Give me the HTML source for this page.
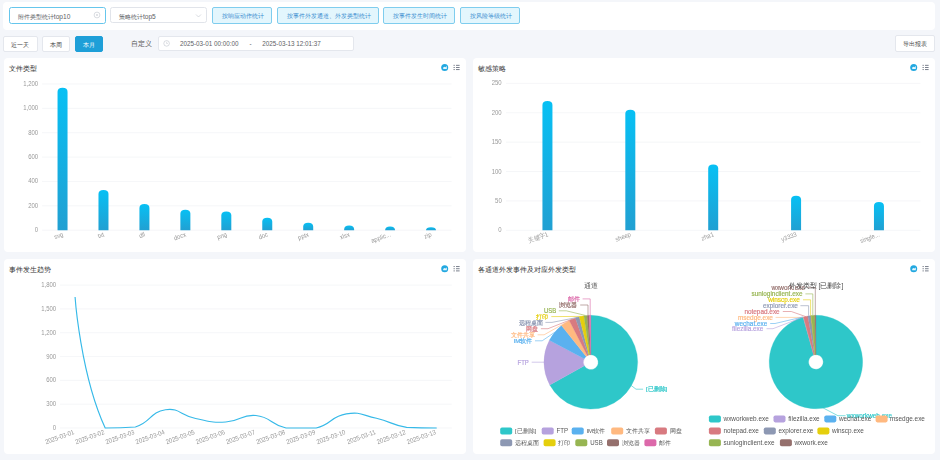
<!DOCTYPE html><html><head><meta charset="utf-8"><style>
*{box-sizing:border-box;margin:0;padding:0}
html,body{width:940px;height:460px;overflow:hidden;background:#f4f6fa;font-family:"Liberation Sans", sans-serif;}
.a{position:absolute}
.card{position:absolute;background:#fff;border-radius:4px}
.inp{position:absolute;background:#fff;border:1px solid #e1e4ea;border-radius:2.5px;font-size:6.5px;color:#606266;line-height:14.5px;white-space:nowrap}
.btn{position:absolute;border:1px solid #7fcdee;background:#e3f6fd;border-radius:2px;font-size:6px;color:#3d8fd2;text-align:center;white-space:nowrap}
.wb{position:absolute;border:1px solid #e4e7ed;background:#fff;border-radius:2px;font-size:6px;color:#606266;text-align:center;white-space:nowrap}
svg text{font-family:"Liberation Sans", sans-serif}
</style></head><body>

<div class="card" style="left:2.9px;top:1.5px;width:932.4px;height:28.3px"></div>
<div class="inp" style="left:9px;top:7px;width:97px;height:16.8px;border-color:#66c6ec"></div>
<div class="a" style="left:17.8px;top:13.80px;font-size:6px;line-height:6px;color:#606266;white-space:nowrap;">附件类型统计<span style="font-size:6.6px">top10</span></div>
<svg class="a" style="left:93px;top:11.3px" width="8" height="8" viewBox="0 0 8 8"><circle cx="4" cy="4" r="2.9" fill="none" stroke="#c0c4cc" stroke-width="0.6"/><path d="M3 3L5 5M5 3L3 5" stroke="#c0c4cc" stroke-width="0.5"/></svg>
<div class="inp" style="left:110.2px;top:7.2px;width:97px;height:16.3px"></div>
<div class="a" style="left:118.9px;top:13.80px;font-size:6px;line-height:6px;color:#606266;white-space:nowrap;">策略统计<span style="font-size:6.6px">top5</span></div>
<svg class="a" style="left:195px;top:12.8px" width="7" height="6" viewBox="0 0 7 6"><path d="M1 1.5L3.5 4L6 1.5" fill="none" stroke="#c0c4cc" stroke-width="0.6"/></svg>
<div class="btn" style="left:212.1px;top:7.2px;width:59.9px;height:16.5px"></div>
<div class="a" style="left:213.1px;width:59.90px;text-align:center;top:12.90px;font-size:6px;line-height:6px;color:#3a8ccf;white-space:nowrap;">按响应动作统计</div>
<div class="btn" style="left:276.8px;top:7.2px;width:101.9px;height:16.5px"></div>
<div class="a" style="left:277.8px;width:101.90px;text-align:center;top:12.90px;font-size:6px;line-height:6px;color:#3a8ccf;white-space:nowrap;">按事件外发通道、外发类型统计</div>
<div class="btn" style="left:383.3px;top:7.2px;width:71.8px;height:16.5px"></div>
<div class="a" style="left:384.3px;width:71.80px;text-align:center;top:12.90px;font-size:6px;line-height:6px;color:#3a8ccf;white-space:nowrap;">按事件发生时间统计</div>
<div class="btn" style="left:460.1px;top:7.2px;width:59.7px;height:16.5px"></div>
<div class="a" style="left:461.1px;width:59.70px;text-align:center;top:12.90px;font-size:6px;line-height:6px;color:#3a8ccf;white-space:nowrap;">按风险等级统计</div>
<div class="wb" style="left:3.2px;top:36.4px;width:34.4px;height:15.5px"></div>
<div class="a" style="left:3.2px;width:34.40px;text-align:center;top:41.70px;font-size:6px;line-height:6px;color:#444;white-space:nowrap;">近一天</div>
<div class="wb" style="left:42.1px;top:36.4px;width:27.7px;height:15.5px"></div>
<div class="a" style="left:42.1px;width:27.70px;text-align:center;top:41.70px;font-size:6px;line-height:6px;color:#444;white-space:nowrap;">本周</div>
<div class="wb" style="left:75.3px;top:36.4px;width:27.7px;height:15.5px;background:#1e9fd8;border-color:#1e9fd8"></div>
<div class="a" style="left:75.3px;width:27.70px;text-align:center;top:41.70px;font-size:6px;line-height:6px;color:#fff;white-space:nowrap;">本月</div>
<div class="a" style="left:131px;top:39.50px;font-size:7px;line-height:7px;color:#555;white-space:nowrap;">自定义</div>
<div class="wb" style="left:157.7px;top:36.4px;width:196.3px;height:14.7px"></div>
<svg class="a" style="left:163px;top:40px" width="8" height="8" viewBox="0 0 8 8"><circle cx="3.6" cy="3.4" r="2.8" fill="none" stroke="#c0c4cc" stroke-width="0.6"/><path d="M3.6 1.8V3.5H4.9" fill="none" stroke="#c0c4cc" stroke-width="0.5"/></svg>
<div class="a" style="left:180px;top:41.08px;font-size:6.3px;line-height:6.3px;color:#606266;white-space:nowrap;">2025-03-01 00:00:00</div>
<div class="a" style="left:249.5px;top:41.08px;font-size:6.3px;line-height:6.3px;color:#606266;white-space:nowrap;">-</div>
<div class="a" style="left:262.3px;top:41.08px;font-size:6.3px;line-height:6.3px;color:#606266;white-space:nowrap;">2025-03-13 12:01:37</div>
<div class="wb" style="left:895.1px;top:35.3px;width:40px;height:16.6px"></div>
<div class="a" style="left:895.1px;width:39.30px;text-align:center;top:41.10px;font-size:6px;line-height:6px;color:#444;white-space:nowrap;">导出报表</div>
<div class="card" style="left:3.5px;top:57.7px;width:462.5px;height:194.7px"></div>
<div class="card" style="left:472.5px;top:57.7px;width:462.5px;height:194.7px"></div>
<div class="card" style="left:3.5px;top:259px;width:462.5px;height:195.0px"></div>
<div class="card" style="left:472.5px;top:259px;width:462.5px;height:195.0px"></div>
<div class="a" style="left:9.1px;top:64.80px;font-size:7px;line-height:7px;color:#333;white-space:nowrap;">文件类型</div>
<div class="a" style="left:478.1px;top:64.80px;font-size:7px;line-height:7px;color:#333;white-space:nowrap;">敏感策略</div>
<div class="a" style="left:9.1px;top:266.10px;font-size:7px;line-height:7px;color:#333;white-space:nowrap;">事件发生趋势</div>
<div class="a" style="left:478.1px;top:266.10px;font-size:7px;line-height:7px;color:#333;white-space:nowrap;">各通道外发事件及对应外发类型</div>
<svg class="a" style="left:0;top:0;will-change:transform" width="940" height="460" viewBox="0 0 940 460">
<defs><linearGradient id="bg" x1="0" y1="0" x2="0" y2="1"><stop offset="0" stop-color="#07c0f4"/><stop offset="1" stop-color="#21a0d2"/></linearGradient></defs>
<circle cx="444.7" cy="67.5" r="3.5" fill="#23a8e0"/>
<path d="M443.20 68.90V67.60L444.30 66.80L445.40 67.20L446.80 66.10V68.90Z" fill="#e6f6fd"/>
<rect x="453.4" y="64.85" width="1.6" height="0.9" fill="#8a8f99"/>
<rect x="456.0" y="64.85" width="3.6" height="0.9" fill="#6b7280"/>
<rect x="453.4" y="67.0" width="1.6" height="0.9" fill="#8a8f99"/>
<rect x="456.0" y="67.0" width="3.6" height="0.9" fill="#6b7280"/>
<rect x="453.4" y="69.14999999999999" width="1.6" height="0.9" fill="#8a8f99"/>
<rect x="456.0" y="69.14999999999999" width="3.6" height="0.9" fill="#6b7280"/>
<circle cx="913.7" cy="67.5" r="3.5" fill="#23a8e0"/>
<path d="M912.20 68.90V67.60L913.30 66.80L914.40 67.20L915.80 66.10V68.90Z" fill="#e6f6fd"/>
<rect x="922.4" y="64.85" width="1.6" height="0.9" fill="#8a8f99"/>
<rect x="925.0" y="64.85" width="3.6" height="0.9" fill="#6b7280"/>
<rect x="922.4" y="67.0" width="1.6" height="0.9" fill="#8a8f99"/>
<rect x="925.0" y="67.0" width="3.6" height="0.9" fill="#6b7280"/>
<rect x="922.4" y="69.14999999999999" width="1.6" height="0.9" fill="#8a8f99"/>
<rect x="925.0" y="69.14999999999999" width="3.6" height="0.9" fill="#6b7280"/>
<circle cx="444.7" cy="268.8" r="3.5" fill="#23a8e0"/>
<path d="M443.20 270.20V268.90L444.30 268.10L445.40 268.50L446.80 267.40V270.20Z" fill="#e6f6fd"/>
<rect x="453.4" y="266.15000000000003" width="1.6" height="0.9" fill="#8a8f99"/>
<rect x="456.0" y="266.15000000000003" width="3.6" height="0.9" fill="#6b7280"/>
<rect x="453.4" y="268.3" width="1.6" height="0.9" fill="#8a8f99"/>
<rect x="456.0" y="268.3" width="3.6" height="0.9" fill="#6b7280"/>
<rect x="453.4" y="270.45000000000005" width="1.6" height="0.9" fill="#8a8f99"/>
<rect x="456.0" y="270.45000000000005" width="3.6" height="0.9" fill="#6b7280"/>
<circle cx="913.7" cy="268.8" r="3.5" fill="#23a8e0"/>
<path d="M912.20 270.20V268.90L913.30 268.10L914.40 268.50L915.80 267.40V270.20Z" fill="#e6f6fd"/>
<rect x="922.4" y="266.15000000000003" width="1.6" height="0.9" fill="#8a8f99"/>
<rect x="925.0" y="266.15000000000003" width="3.6" height="0.9" fill="#6b7280"/>
<rect x="922.4" y="268.3" width="1.6" height="0.9" fill="#8a8f99"/>
<rect x="925.0" y="268.3" width="3.6" height="0.9" fill="#6b7280"/>
<rect x="922.4" y="270.45000000000005" width="1.6" height="0.9" fill="#8a8f99"/>
<rect x="925.0" y="270.45000000000005" width="3.6" height="0.9" fill="#6b7280"/>
<line x1="42.07" y1="230.20" x2="451.5" y2="230.20" stroke="#eef0f3" stroke-width="0.6"/>
<text transform="translate(38.1,232.20) scale(0.88,1)" font-size="6.8" fill="#999" text-anchor="end">0</text>
<line x1="42.07" y1="205.83" x2="451.5" y2="205.83" stroke="#eef0f3" stroke-width="0.6"/>
<text transform="translate(38.1,207.83) scale(0.88,1)" font-size="6.8" fill="#999" text-anchor="end">200</text>
<line x1="42.07" y1="181.47" x2="451.5" y2="181.47" stroke="#eef0f3" stroke-width="0.6"/>
<text transform="translate(38.1,183.47) scale(0.88,1)" font-size="6.8" fill="#999" text-anchor="end">400</text>
<line x1="42.07" y1="157.10" x2="451.5" y2="157.10" stroke="#eef0f3" stroke-width="0.6"/>
<text transform="translate(38.1,159.10) scale(0.88,1)" font-size="6.8" fill="#999" text-anchor="end">600</text>
<line x1="42.07" y1="132.73" x2="451.5" y2="132.73" stroke="#eef0f3" stroke-width="0.6"/>
<text transform="translate(38.1,134.73) scale(0.88,1)" font-size="6.8" fill="#999" text-anchor="end">800</text>
<line x1="42.07" y1="108.37" x2="451.5" y2="108.37" stroke="#eef0f3" stroke-width="0.6"/>
<text transform="translate(38.1,110.37) scale(0.88,1)" font-size="6.8" fill="#999" text-anchor="end">1,000</text>
<line x1="42.07" y1="84.00" x2="451.5" y2="84.00" stroke="#eef0f3" stroke-width="0.6"/>
<text transform="translate(38.1,86.00) scale(0.88,1)" font-size="6.8" fill="#999" text-anchor="end">1,200</text>
<path d="M57.54 230.2V91.66Q57.54 87.66 62.54 87.66Q67.54 87.66 67.54 91.66V230.2Z" fill="url(#bg)"/>
<text transform="translate(62.04,231.70) rotate(-20) scale(0.9,1)" x="0" y="4.7" font-size="6.6" fill="#999" text-anchor="end">svg</text>
<path d="M98.48 230.2V194.00Q98.48 190.00 103.48 190.00Q108.48 190.00 108.48 194.00V230.2Z" fill="url(#bg)"/>
<text transform="translate(102.98,231.70) rotate(-20) scale(0.9,1)" x="0" y="4.7" font-size="6.6" fill="#999" text-anchor="end">txt</text>
<path d="M139.43 230.2V207.88Q139.43 203.88 144.43 203.88Q149.43 203.88 149.43 207.88V230.2Z" fill="url(#bg)"/>
<text transform="translate(143.93,231.70) rotate(-20) scale(0.9,1)" x="0" y="4.7" font-size="6.6" fill="#999" text-anchor="end">dll</text>
<path d="M180.37 230.2V213.73Q180.37 209.73 185.37 209.73Q190.37 209.73 190.37 213.73V230.2Z" fill="url(#bg)"/>
<text transform="translate(184.87,231.70) rotate(-20) scale(0.9,1)" x="0" y="4.7" font-size="6.6" fill="#999" text-anchor="end">docx</text>
<path d="M221.31 230.2V215.56Q221.31 211.56 226.31 211.56Q231.31 211.56 231.31 215.56V230.2Z" fill="url(#bg)"/>
<text transform="translate(225.81,231.70) rotate(-20) scale(0.9,1)" x="0" y="4.7" font-size="6.6" fill="#999" text-anchor="end">png</text>
<path d="M262.26 230.2V221.65Q262.26 217.65 267.26 217.65Q272.26 217.65 272.26 221.65V230.2Z" fill="url(#bg)"/>
<text transform="translate(266.76,231.70) rotate(-20) scale(0.9,1)" x="0" y="4.7" font-size="6.6" fill="#999" text-anchor="end">doc</text>
<path d="M303.20 230.2V226.77Q303.20 222.77 308.20 222.77Q313.20 222.77 313.20 226.77V230.2Z" fill="url(#bg)"/>
<text transform="translate(307.70,231.70) rotate(-20) scale(0.9,1)" x="0" y="4.7" font-size="6.6" fill="#999" text-anchor="end">pptx</text>
<path d="M344.14 230.2V229.57Q344.14 225.57 349.14 225.57Q354.14 225.57 354.14 229.57V230.2Z" fill="url(#bg)"/>
<text transform="translate(348.64,231.70) rotate(-20) scale(0.9,1)" x="0" y="4.7" font-size="6.6" fill="#999" text-anchor="end">xlsx</text>
<path d="M385.09 230.2V230.20Q385.09 226.42 390.09 226.42Q395.09 226.42 395.09 230.20V230.2Z" fill="url(#bg)"/>
<text transform="translate(389.59,231.70) rotate(-20) scale(0.9,1)" x="0" y="4.7" font-size="6.6" fill="#999" text-anchor="end">applic...</text>
<path d="M426.03 230.2V230.20Q426.03 227.15 431.03 227.15Q436.03 227.15 436.03 230.20V230.2Z" fill="url(#bg)"/>
<text transform="translate(430.53,231.70) rotate(-20) scale(0.9,1)" x="0" y="4.7" font-size="6.6" fill="#999" text-anchor="end">zip</text>
<line x1="506" y1="230.30" x2="920.4" y2="230.30" stroke="#eef0f3" stroke-width="0.6"/>
<text transform="translate(501.7,232.30) scale(0.88,1)" font-size="6.8" fill="#999" text-anchor="end">0</text>
<line x1="506" y1="200.92" x2="920.4" y2="200.92" stroke="#eef0f3" stroke-width="0.6"/>
<text transform="translate(501.7,202.92) scale(0.88,1)" font-size="6.8" fill="#999" text-anchor="end">50</text>
<line x1="506" y1="171.54" x2="920.4" y2="171.54" stroke="#eef0f3" stroke-width="0.6"/>
<text transform="translate(501.7,173.54) scale(0.88,1)" font-size="6.8" fill="#999" text-anchor="end">100</text>
<line x1="506" y1="142.16" x2="920.4" y2="142.16" stroke="#eef0f3" stroke-width="0.6"/>
<text transform="translate(501.7,144.16) scale(0.88,1)" font-size="6.8" fill="#999" text-anchor="end">150</text>
<line x1="506" y1="112.78" x2="920.4" y2="112.78" stroke="#eef0f3" stroke-width="0.6"/>
<text transform="translate(501.7,114.78) scale(0.88,1)" font-size="6.8" fill="#999" text-anchor="end">200</text>
<line x1="506" y1="83.40" x2="920.4" y2="83.40" stroke="#eef0f3" stroke-width="0.6"/>
<text transform="translate(501.7,85.40) scale(0.88,1)" font-size="6.8" fill="#999" text-anchor="end">250</text>
<path d="M542.44 230.3V105.03Q542.44 101.03 547.44 101.03Q552.44 101.03 552.44 105.03V230.3Z" fill="url(#bg)"/>
<text transform="translate(546.94,231.80) rotate(-20) scale(0.9,1)" x="0" y="4.7" font-size="6.6" fill="#999" text-anchor="end">关键字1</text>
<path d="M625.32 230.3V113.84Q625.32 109.84 630.32 109.84Q635.32 109.84 635.32 113.84V230.3Z" fill="url(#bg)"/>
<text transform="translate(629.82,231.80) rotate(-20) scale(0.9,1)" x="0" y="4.7" font-size="6.6" fill="#999" text-anchor="end">sheep</text>
<path d="M708.20 230.3V168.49Q708.20 164.49 713.20 164.49Q718.20 164.49 718.20 168.49V230.3Z" fill="url(#bg)"/>
<text transform="translate(712.70,231.80) rotate(-20) scale(0.9,1)" x="0" y="4.7" font-size="6.6" fill="#999" text-anchor="end">zha1</text>
<path d="M791.08 230.3V199.81Q791.08 195.81 796.08 195.81Q801.08 195.81 801.08 199.81V230.3Z" fill="url(#bg)"/>
<text transform="translate(795.58,231.80) rotate(-20) scale(0.9,1)" x="0" y="4.7" font-size="6.6" fill="#999" text-anchor="end">y3333</text>
<path d="M873.96 230.3V206.10Q873.96 202.10 878.96 202.10Q883.96 202.10 883.96 206.10V230.3Z" fill="url(#bg)"/>
<text transform="translate(878.46,231.80) rotate(-20) scale(0.9,1)" x="0" y="4.7" font-size="6.6" fill="#999" text-anchor="end">single...</text>
<line x1="60" y1="428.00" x2="451.8" y2="428.00" stroke="#eef0f3" stroke-width="0.6"/>
<text transform="translate(56.2,430.00) scale(0.88,1)" font-size="6.8" fill="#999" text-anchor="end">0</text>
<line x1="60" y1="404.18" x2="451.8" y2="404.18" stroke="#eef0f3" stroke-width="0.6"/>
<text transform="translate(56.2,406.18) scale(0.88,1)" font-size="6.8" fill="#999" text-anchor="end">300</text>
<line x1="60" y1="380.37" x2="451.8" y2="380.37" stroke="#eef0f3" stroke-width="0.6"/>
<text transform="translate(56.2,382.37) scale(0.88,1)" font-size="6.8" fill="#999" text-anchor="end">600</text>
<line x1="60" y1="356.55" x2="451.8" y2="356.55" stroke="#eef0f3" stroke-width="0.6"/>
<text transform="translate(56.2,358.55) scale(0.88,1)" font-size="6.8" fill="#999" text-anchor="end">900</text>
<line x1="60" y1="332.73" x2="451.8" y2="332.73" stroke="#eef0f3" stroke-width="0.6"/>
<text transform="translate(56.2,334.73) scale(0.88,1)" font-size="6.8" fill="#999" text-anchor="end">1,200</text>
<line x1="60" y1="308.92" x2="451.8" y2="308.92" stroke="#eef0f3" stroke-width="0.6"/>
<text transform="translate(56.2,310.92) scale(0.88,1)" font-size="6.8" fill="#999" text-anchor="end">1,500</text>
<line x1="60" y1="285.10" x2="451.8" y2="285.10" stroke="#eef0f3" stroke-width="0.6"/>
<text transform="translate(56.2,287.10) scale(0.88,1)" font-size="6.8" fill="#999" text-anchor="end">1,800</text>
<text transform="translate(73.07,429.50) rotate(-20) scale(0.9,1)" x="0" y="4.7" font-size="6.6" fill="#999" text-anchor="end">2025-03-01</text>
<text transform="translate(103.21,429.50) rotate(-20) scale(0.9,1)" x="0" y="4.7" font-size="6.6" fill="#999" text-anchor="end">2025-03-02</text>
<text transform="translate(133.35,429.50) rotate(-20) scale(0.9,1)" x="0" y="4.7" font-size="6.6" fill="#999" text-anchor="end">2025-03-03</text>
<text transform="translate(163.48,429.50) rotate(-20) scale(0.9,1)" x="0" y="4.7" font-size="6.6" fill="#999" text-anchor="end">2025-03-04</text>
<text transform="translate(193.62,429.50) rotate(-20) scale(0.9,1)" x="0" y="4.7" font-size="6.6" fill="#999" text-anchor="end">2025-03-05</text>
<text transform="translate(223.76,429.50) rotate(-20) scale(0.9,1)" x="0" y="4.7" font-size="6.6" fill="#999" text-anchor="end">2025-03-06</text>
<text transform="translate(253.90,429.50) rotate(-20) scale(0.9,1)" x="0" y="4.7" font-size="6.6" fill="#999" text-anchor="end">2025-03-07</text>
<text transform="translate(284.04,429.50) rotate(-20) scale(0.9,1)" x="0" y="4.7" font-size="6.6" fill="#999" text-anchor="end">2025-03-08</text>
<text transform="translate(314.18,429.50) rotate(-20) scale(0.9,1)" x="0" y="4.7" font-size="6.6" fill="#999" text-anchor="end">2025-03-09</text>
<text transform="translate(344.32,429.50) rotate(-20) scale(0.9,1)" x="0" y="4.7" font-size="6.6" fill="#999" text-anchor="end">2025-03-10</text>
<text transform="translate(374.45,429.50) rotate(-20) scale(0.9,1)" x="0" y="4.7" font-size="6.6" fill="#999" text-anchor="end">2025-03-11</text>
<text transform="translate(404.59,429.50) rotate(-20) scale(0.9,1)" x="0" y="4.7" font-size="6.6" fill="#999" text-anchor="end">2025-03-12</text>
<text transform="translate(434.73,429.50) rotate(-20) scale(0.9,1)" x="0" y="4.7" font-size="6.6" fill="#999" text-anchor="end">2025-03-13</text>
<path d="M75.07 297.01 C75.07 297.01 80.59 374.89 105.21 428.00 C110.73 428.00 121.35 428.00 135.35 427.05 C151.48 422.16 149.65 411.99 165.48 409.74 C179.78 407.71 180.30 415.35 195.62 418.47 C210.44 421.50 210.82 422.79 225.76 422.05 C240.95 421.29 241.26 414.01 255.90 415.46 C271.40 416.99 270.37 424.74 286.04 428.00 C300.51 428.00 301.86 428.00 316.18 428.00 C331.99 424.29 330.58 416.40 346.32 413.87 C360.72 411.55 361.63 415.00 376.45 418.31 C391.77 421.74 391.20 424.89 406.59 427.36 C421.34 428.00 436.73 428.00 436.73 428.00" fill="none" stroke="#36b9e8" stroke-width="1.15"/>
<path d="M590.80 315.30A46.9 46.9 0 1 1 549.78 384.94L584.33 365.79A7.4 7.4 0 1 0 590.80 354.80Z" fill="#2ec7c9" stroke="#2ec7c9" stroke-width="0.3" stroke-linejoin="round"/>
<path d="M549.78 384.94A46.9 46.9 0 0 1 549.39 340.18L584.27 358.73A7.4 7.4 0 0 0 584.33 365.79Z" fill="#b6a2de" stroke="#b6a2de" stroke-width="0.3" stroke-linejoin="round"/>
<path d="M549.39 340.18A46.9 46.9 0 0 1 561.54 325.55L586.18 356.42A7.4 7.4 0 0 0 584.27 358.73Z" fill="#5ab1ef" stroke="#5ab1ef" stroke-width="0.3" stroke-linejoin="round"/>
<path d="M561.54 325.55A46.9 46.9 0 0 1 569.22 320.56L587.39 355.63A7.4 7.4 0 0 0 586.18 356.42Z" fill="#ffb980" stroke="#ffb980" stroke-width="0.3" stroke-linejoin="round"/>
<path d="M569.22 320.56A46.9 46.9 0 0 1 575.38 317.91L588.37 355.21A7.4 7.4 0 0 0 587.39 355.63Z" fill="#d87a80" stroke="#d87a80" stroke-width="0.3" stroke-linejoin="round"/>
<path d="M575.38 317.91A46.9 46.9 0 0 1 579.30 316.73L588.98 355.03A7.4 7.4 0 0 0 588.37 355.21Z" fill="#8d98b3" stroke="#8d98b3" stroke-width="0.3" stroke-linejoin="round"/>
<path d="M579.30 316.73A46.9 46.9 0 0 1 583.91 315.81L589.71 354.88A7.4 7.4 0 0 0 588.98 355.03Z" fill="#e5cf0d" stroke="#e5cf0d" stroke-width="0.3" stroke-linejoin="round"/>
<path d="M583.91 315.81A46.9 46.9 0 0 1 587.12 315.44L590.22 354.82A7.4 7.4 0 0 0 589.71 354.88Z" fill="#97b552" stroke="#97b552" stroke-width="0.3" stroke-linejoin="round"/>
<path d="M587.12 315.44A46.9 46.9 0 0 1 589.20 315.33L590.55 354.80A7.4 7.4 0 0 0 590.22 354.82Z" fill="#95706d" stroke="#95706d" stroke-width="0.3" stroke-linejoin="round"/>
<path d="M589.20 315.33A46.9 46.9 0 0 1 590.80 315.30L590.80 354.80A7.4 7.4 0 0 0 590.55 354.80Z" fill="#dc69aa" stroke="#dc69aa" stroke-width="0.3" stroke-linejoin="round"/>
<path d="M815.90 315.30A46.7 46.7 0 1 1 803.08 317.10L813.90 354.98A7.3 7.3 0 1 0 815.90 354.70Z" fill="#2ec7c9" stroke="#2ec7c9" stroke-width="0.3" stroke-linejoin="round"/>
<path d="M803.08 317.10A46.7 46.7 0 0 1 803.23 317.05L813.92 354.97A7.3 7.3 0 0 0 813.90 354.98Z" fill="#b6a2de" stroke="#b6a2de" stroke-width="0.3" stroke-linejoin="round"/>
<path d="M803.23 317.05A46.7 46.7 0 0 1 803.39 317.01L813.94 354.97A7.3 7.3 0 0 0 813.92 354.97Z" fill="#5ab1ef" stroke="#5ab1ef" stroke-width="0.3" stroke-linejoin="round"/>
<path d="M803.39 317.01A46.7 46.7 0 0 1 803.55 316.96L813.97 354.96A7.3 7.3 0 0 0 813.94 354.97Z" fill="#ffb980" stroke="#ffb980" stroke-width="0.3" stroke-linejoin="round"/>
<path d="M803.55 316.96A46.7 46.7 0 0 1 807.84 316.00L814.64 354.81A7.3 7.3 0 0 0 813.97 354.96Z" fill="#d87a80" stroke="#d87a80" stroke-width="0.3" stroke-linejoin="round"/>
<path d="M807.84 316.00A46.7 46.7 0 0 1 811.10 315.55L815.15 354.74A7.3 7.3 0 0 0 814.64 354.81Z" fill="#8d98b3" stroke="#8d98b3" stroke-width="0.3" stroke-linejoin="round"/>
<path d="M811.10 315.55A46.7 46.7 0 0 1 811.31 315.53L815.18 354.74A7.3 7.3 0 0 0 815.15 354.74Z" fill="#e5cf0d" stroke="#e5cf0d" stroke-width="0.3" stroke-linejoin="round"/>
<path d="M811.31 315.53A46.7 46.7 0 0 1 814.80 315.31L815.73 354.70A7.3 7.3 0 0 0 815.18 354.74Z" fill="#97b552" stroke="#97b552" stroke-width="0.3" stroke-linejoin="round"/>
<path d="M814.80 315.31A46.7 46.7 0 0 1 815.90 315.30L815.90 354.70A7.3 7.3 0 0 0 815.73 354.70Z" fill="#95706d" stroke="#95706d" stroke-width="0.3" stroke-linejoin="round"/>
<polyline points="582.60,298.90 590.20,298.90 590.20,315.30" fill="none" stroke="#dc69aa" stroke-width="0.6"/>
<text x="579.60" y="301.10" font-size="6" fill="#dc69aa" stroke="#dc69aa" stroke-width="0.2" text-anchor="end">邮件</text>
<polyline points="580.20,305.00 588.00,305.00 588.00,315.20" fill="none" stroke="#95706d" stroke-width="0.6"/>
<text x="577.00" y="307.20" font-size="6" fill="#95706d" stroke="#95706d" stroke-width="0.2" text-anchor="end">浏览器</text>
<polyline points="558.80,310.80 566.30,310.80 585.70,315.50" fill="none" stroke="#97b552" stroke-width="0.6"/>
<text transform="translate(556.10,313.20) scale(0.9,1)" font-size="6.6" fill="#97b552" stroke="#97b552" stroke-width="0.2" text-anchor="end">USB</text>
<polyline points="551.30,316.60 581.80,316.40" fill="none" stroke="#e5cf0d" stroke-width="0.6"/>
<text x="548.20" y="318.80" font-size="6" fill="#e5cf0d" stroke="#e5cf0d" stroke-width="0.2" text-anchor="end">打印</text>
<polyline points="545.40,322.40 552.00,322.40 577.50,317.40" fill="none" stroke="#8d98b3" stroke-width="0.6"/>
<text x="542.60" y="324.60" font-size="6" fill="#8d98b3" stroke="#8d98b3" stroke-width="0.2" text-anchor="end">远程桌面</text>
<polyline points="540.90,328.70 548.00,328.70 572.40,319.00" fill="none" stroke="#d87a80" stroke-width="0.6"/>
<text x="538.40" y="330.90" font-size="6" fill="#d87a80" stroke="#d87a80" stroke-width="0.2" text-anchor="end">网盘</text>
<polyline points="537.60,334.80 544.10,334.80 565.40,322.80" fill="none" stroke="#ffb980" stroke-width="0.6"/>
<text x="534.80" y="337.00" font-size="6" fill="#ffb980" stroke="#ffb980" stroke-width="0.2" text-anchor="end">文件共享</text>
<polyline points="535.00,340.80 542.20,340.80 554.80,332.20" fill="none" stroke="#5ab1ef" stroke-width="0.6"/>
<text x="532.30" y="343.00" font-size="6" fill="#5ab1ef" stroke="#5ab1ef" stroke-width="0.2" text-anchor="end">IM软件</text>
<polyline points="531.70,362.20 544.00,362.20" fill="none" stroke="#b6a2de" stroke-width="0.6"/>
<text transform="translate(528.80,364.60) scale(0.9,1)" font-size="6.6" fill="#b6a2de" stroke="#b6a2de" stroke-width="0.2" text-anchor="end">FTP</text>
<polyline points="631.30,385.60 636.00,389.20 643.10,389.20" fill="none" stroke="#2ec7c9" stroke-width="0.6"/>
<text x="645.90" y="391.10" font-size="6" fill="#2ec7c9" stroke="#2ec7c9" stroke-width="0.2" text-anchor="start">[已删除]</text>
<polyline points="807.50,287.60 815.30,287.60 815.30,315.30" fill="none" stroke="#95706d" stroke-width="0.6"/>
<text transform="translate(805.00,290.00) scale(0.93,1)" font-size="6.9" fill="#95706d" stroke="#95706d" stroke-width="0.2" text-anchor="end">wxwork.exe</text>
<polyline points="805.40,293.90 812.80,293.90 812.80,315.40" fill="none" stroke="#97b552" stroke-width="0.6"/>
<text transform="translate(802.50,296.30) scale(0.93,1)" font-size="6.9" fill="#97b552" stroke="#97b552" stroke-width="0.2" text-anchor="end">sunloginclient.exe</text>
<polyline points="803.00,299.80 810.60,299.80 810.60,315.50" fill="none" stroke="#e5cf0d" stroke-width="0.6"/>
<text transform="translate(799.90,302.20) scale(0.93,1)" font-size="6.9" fill="#e5cf0d" stroke="#e5cf0d" stroke-width="0.2" text-anchor="end">winscp.exe</text>
<polyline points="800.40,305.70 808.60,305.70 808.60,315.70" fill="none" stroke="#8d98b3" stroke-width="0.6"/>
<text transform="translate(797.90,308.10) scale(0.93,1)" font-size="6.9" fill="#8d98b3" stroke="#8d98b3" stroke-width="0.2" text-anchor="end">explorer.exe</text>
<polyline points="782.80,311.50 791.30,311.50 806.00,316.70" fill="none" stroke="#d87a80" stroke-width="0.6"/>
<text transform="translate(779.70,313.90) scale(0.93,1)" font-size="6.9" fill="#d87a80" stroke="#d87a80" stroke-width="0.2" text-anchor="end">notepad.exe</text>
<polyline points="775.60,317.40 803.20,317.40" fill="none" stroke="#ffb980" stroke-width="0.6"/>
<text transform="translate(772.90,319.80) scale(0.93,1)" font-size="6.9" fill="#ffb980" stroke="#ffb980" stroke-width="0.2" text-anchor="end">msedge.exe</text>
<polyline points="770.20,323.50 775.00,323.50 802.80,317.00" fill="none" stroke="#5ab1ef" stroke-width="0.6"/>
<text transform="translate(767.30,325.90) scale(0.93,1)" font-size="6.9" fill="#5ab1ef" stroke="#5ab1ef" stroke-width="0.2" text-anchor="end">wechat.exe</text>
<polyline points="766.50,328.70 773.00,328.70 802.50,317.30" fill="none" stroke="#b6a2de" stroke-width="0.6"/>
<text transform="translate(763.40,331.10) scale(0.93,1)" font-size="6.9" fill="#b6a2de" stroke="#b6a2de" stroke-width="0.2" text-anchor="end">filezilla.exe</text>
<polyline points="822.50,407.60 837.90,415.70 845.50,415.70" fill="none" stroke="#2ec7c9" stroke-width="0.6"/>
<text transform="translate(846.80,418.10) scale(0.93,1)" font-size="6.9" fill="#2ec7c9" stroke="#2ec7c9" stroke-width="0.2" text-anchor="start">wxworkweb.exe</text>
<rect x="500.20" y="427.50" width="12" height="7" rx="1.8" fill="#2ec7c9"/>
<text x="514.90" y="433.20" font-size="6" fill="#555">[已删除]</text>
<rect x="541.70" y="427.50" width="12" height="7" rx="1.8" fill="#b6a2de"/>
<text transform="translate(556.60,433.40) scale(0.9,1)" font-size="6.8" fill="#555">FTP</text>
<rect x="571.70" y="427.50" width="12" height="7" rx="1.8" fill="#5ab1ef"/>
<text x="586.40" y="433.20" font-size="6" fill="#555">IM软件</text>
<rect x="611.20" y="427.50" width="12" height="7" rx="1.8" fill="#ffb980"/>
<text x="626.20" y="433.20" font-size="6" fill="#555">文件共享</text>
<rect x="654.90" y="427.50" width="12" height="7" rx="1.8" fill="#d87a80"/>
<text x="669.60" y="433.20" font-size="6" fill="#555">网盘</text>
<rect x="500.20" y="439.20" width="12" height="7" rx="1.8" fill="#8d98b3"/>
<text x="514.90" y="444.90" font-size="6" fill="#555">远程桌面</text>
<rect x="543.60" y="439.20" width="12" height="7" rx="1.8" fill="#e5cf0d"/>
<text x="558.30" y="444.90" font-size="6" fill="#555">打印</text>
<rect x="575.30" y="439.20" width="12" height="7" rx="1.8" fill="#97b552"/>
<text transform="translate(590.20,445.10) scale(0.9,1)" font-size="6.8" fill="#555">USB</text>
<rect x="607.00" y="439.20" width="12" height="7" rx="1.8" fill="#95706d"/>
<text x="621.70" y="444.90" font-size="6" fill="#555">浏览器</text>
<rect x="644.40" y="439.20" width="12" height="7" rx="1.8" fill="#dc69aa"/>
<text x="659.40" y="444.90" font-size="6" fill="#555">邮件</text>
<rect x="708.90" y="415.40" width="12" height="7" rx="1.8" fill="#2ec7c9"/>
<text transform="translate(723.50,421.30) scale(0.93,1)" font-size="6.9" fill="#555">wxworkweb.exe</text>
<rect x="773.50" y="415.40" width="12" height="7" rx="1.8" fill="#b6a2de"/>
<text transform="translate(788.30,421.30) scale(0.93,1)" font-size="6.9" fill="#555">filezilla.exe</text>
<rect x="824.30" y="415.40" width="12" height="7" rx="1.8" fill="#5ab1ef"/>
<text transform="translate(838.90,421.30) scale(0.93,1)" font-size="6.9" fill="#555">wechat.exe</text>
<rect x="875.60" y="415.40" width="12" height="7" rx="1.8" fill="#ffb980"/>
<text transform="translate(890.00,421.30) scale(0.93,1)" font-size="6.9" fill="#555">msedge.exe</text>
<rect x="708.90" y="427.40" width="12" height="7" rx="1.8" fill="#d87a80"/>
<text transform="translate(723.50,433.30) scale(0.93,1)" font-size="6.9" fill="#555">notepad.exe</text>
<rect x="763.80" y="427.40" width="12" height="7" rx="1.8" fill="#8d98b3"/>
<text transform="translate(778.50,433.30) scale(0.93,1)" font-size="6.9" fill="#555">explorer.exe</text>
<rect x="817.40" y="427.40" width="12" height="7" rx="1.8" fill="#e5cf0d"/>
<text transform="translate(832.00,433.30) scale(0.93,1)" font-size="6.9" fill="#555">winscp.exe</text>
<rect x="708.90" y="439.20" width="12" height="7" rx="1.8" fill="#97b552"/>
<text transform="translate(723.50,445.10) scale(0.93,1)" font-size="6.9" fill="#555">sunloginclient.exe</text>
<rect x="779.90" y="439.20" width="12" height="7" rx="1.8" fill="#95706d"/>
<text transform="translate(794.40,445.10) scale(0.93,1)" font-size="6.9" fill="#555">wxwork.exe</text>
<text x="591.1" y="288" font-size="6.5" fill="#555" text-anchor="middle">通道</text>
<text x="816" y="288" font-size="6.5" fill="#444" text-anchor="middle">外发类型 [已删除]</text>
</svg>
</body></html>
